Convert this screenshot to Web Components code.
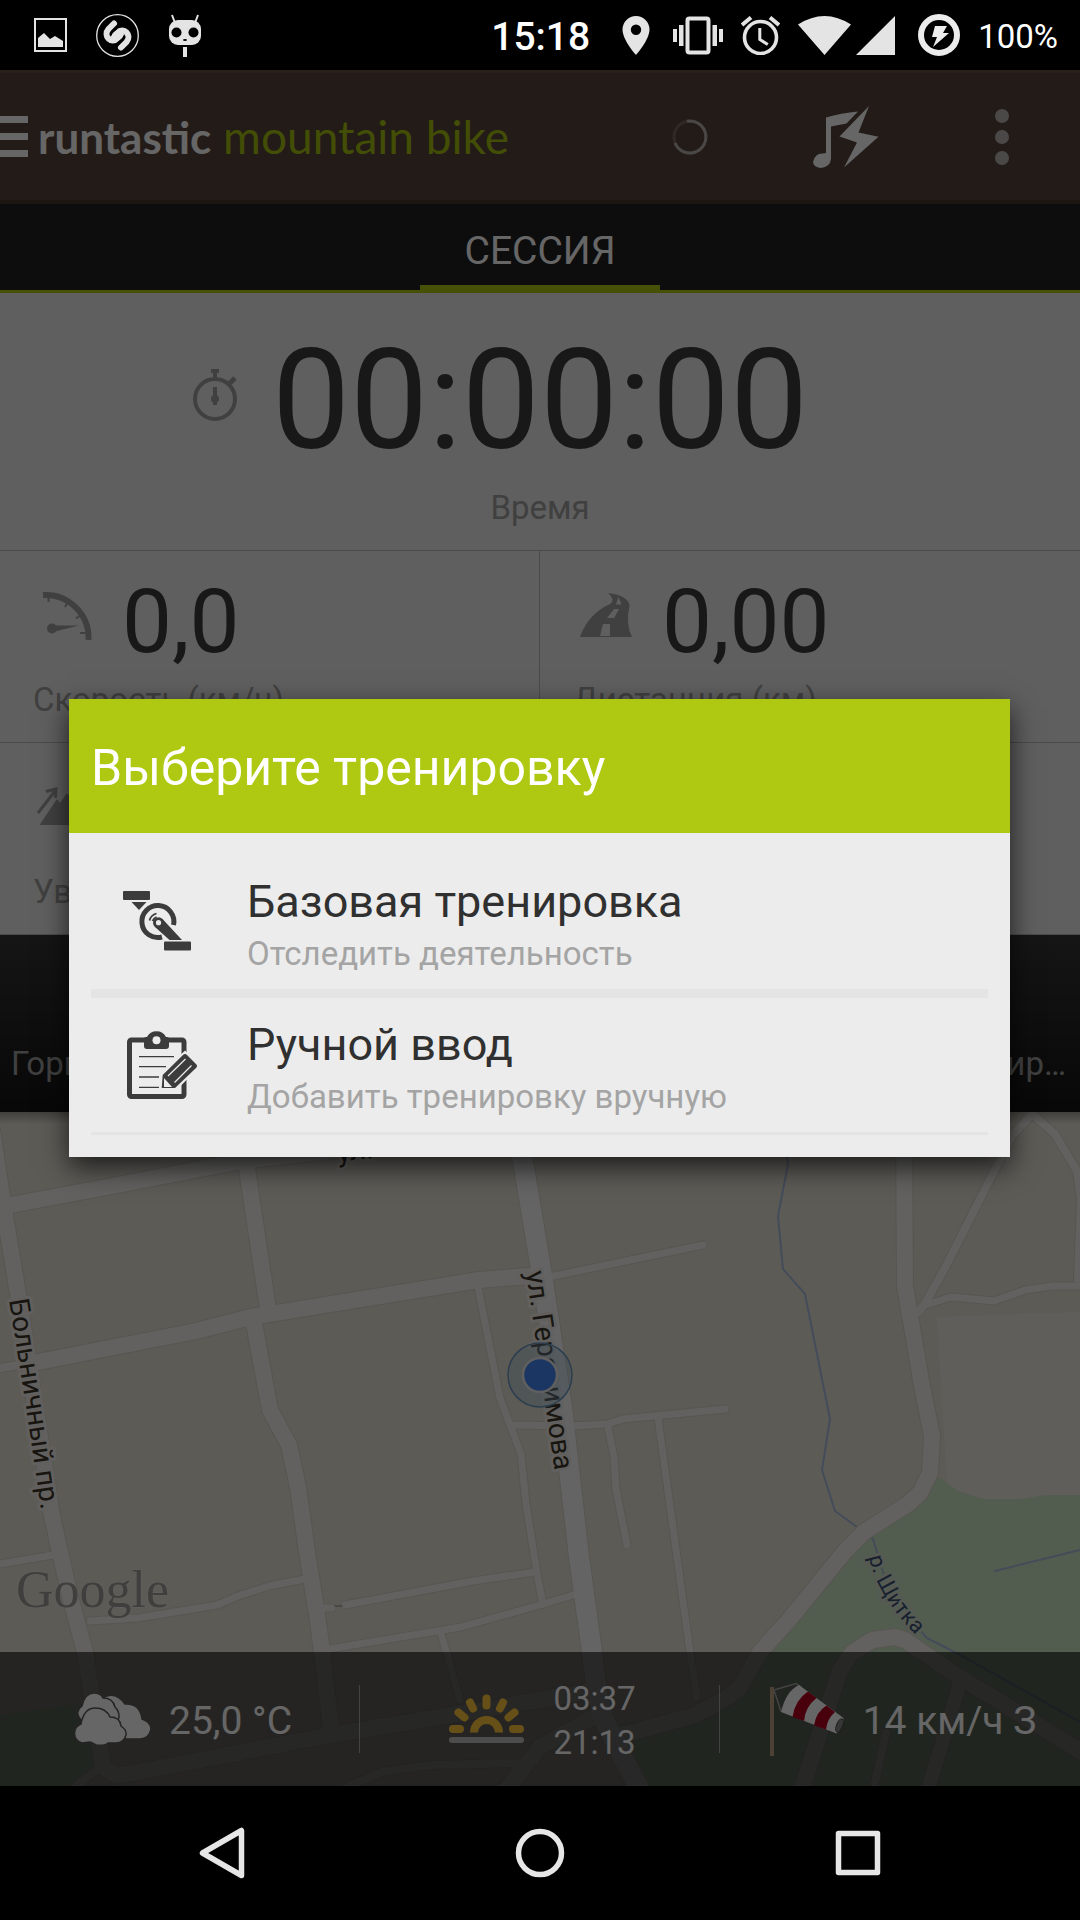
<!DOCTYPE html>
<html lang="ru">
<head>
<meta charset="UTF-8">
<meta name="viewport" content="width=device-width, initial-scale=1">
<title>Runtastic Mountain Bike</title>
<style>
    body {
        margin: 0;
        background: #000;
        font-family: Roboto, "Noto Sans", sans-serif;
    }
</style>
</head>
<body>
<phone-screen>
    <status-bar slot="status"></status-bar>
    <app-header></app-header>
    <tab-strip>СЕССИЯ</tab-strip>
    <stats-panel></stats-panel>
    <sport-band>
        <span>Горный</span>
        <span slot="end">Тренир…</span>
    </sport-band>
    <map-view>
        <weather-bar></weather-bar>
    </map-view>
    <workout-dialog slot="dialog" heading="Выберите тренировку">
        <workout-option heading="Базовая тренировка" note="Отследить деятельность">
            <svg slot="icon" viewBox="0 0 90 90" fill="#3c3c3c" aria-hidden="true">
                <rect x="10" y="14" width="27" height="9" rx="1"/>
                <path d="M18.500 25h15l-7.500 8z"/>
                <path d="M60.500 48A16 16 0 1 0 49 60" fill="none" stroke="#3c3c3c" stroke-width="5"/>
                <path d="M36.500 43.500a10 10 0 0 1 7-7M39.500 44a7 7 0 0 1 4-4" fill="none" stroke="#3c3c3c" stroke-width="1.800"/>
                <path d="M49.500 42L69 63H56.500L42 50z"/>
                <circle cx="45.500" cy="45.700" r="5.500"/>
                <circle cx="45.500" cy="45.700" r="2.600" fill="#ececec"/>
                <rect x="51" y="64.500" width="27" height="9" rx="1"/>
            </svg>
        </workout-option>
        <workout-option heading="Ручной ввод" note="Добавить тренировку вручную" last>
            <svg slot="icon" viewBox="0 0 90 90" fill="#3c3c3c" aria-hidden="true">
                <rect x="16.500" y="20" width="54.500" height="56.500" rx="2" fill="none" stroke="#3c3c3c" stroke-width="5"/>
                <path d="M31 19q0-2 2-2h1a10.500 10 0 0 1 19 0h1q2 0 2 2v7q0 3-3 3H34q-3 0-3-3z"/>
                <circle cx="43.500" cy="20.300" r="4" fill="#ececec"/>
                <path d="M26 36.700h35M26 46.700h27M26 57h20M26 67.300h20" stroke="#3c3c3c" stroke-width="1.300"/>
                <path d="M49.700 55L72 34l12 12-22 22H48.700z" stroke="#ececec" stroke-width="5"/>
                <path d="M49.700 55L70 35q2-2 4 0l9 9q2 2 0 4L62 68H48.700z"/>
                <path d="M51 58l8 9h-8z" fill="#ececec"/>
                <path d="M55 56l17.500-17M61.500 62.500l17-17" stroke="#ececec" stroke-width="1.200"/>
            </svg>
        </workout-option>
    </workout-dialog>
    <nav-bar slot="nav"></nav-bar>
</phone-screen>

<script>
// Shared helper: every element renders its markup into an open shadow root
class BaseElement extends HTMLElement {
    constructor() {
        super();
        this.attachShadow({ mode: "open" });
    }

    connectedCallback() {
        this.shadowRoot.innerHTML = this.render();
    }
}

class PhoneScreen extends BaseElement {
    render() {
        return `
            <style>
                :host { display: flex; flex-direction: column; min-height: 100vh; }
                main { flex: 1; display: grid; position: relative; }
                .app { display: flex; flex-direction: column; min-width: 0; }
                .scrim {
                    position: absolute;
                    inset: 0;
                    display: grid;
                    align-items: center;
                    padding: 0 70px 0 69px;
                    background: rgba(0, 0, 0, 0.6);
                }
            </style>
            <slot name="status"></slot>
            <main>
                <div class="app"><slot></slot></div>
                <div class="scrim"><slot name="dialog"></slot></div>
            </main>
            <slot name="nav"></slot>
        `;
    }
}

class StatusBar extends BaseElement {
    render() {
        return `
            <style>
                :host {
                    display: flex;
                    justify-content: space-between;
                    height: 70px;
                    padding: 0 22px 0 34px;
                    background: #000;
                    color: #fff;
                    box-sizing: border-box;
                }
                div { display: flex; align-items: center; }
                .left { gap: 29px; }
                .right { gap: 18px; }
                svg { display: block; }
                span { padding-top: 3px; }
                .time { font-size: 39px; font-weight: 500; margin-right: 8px; }
                .battery { font-size: 33px; }
            </style>
            <div class="left">
                <svg width="33" height="34" viewBox="0 0 33 34" aria-hidden="true">
                    <rect x="1" y="1" width="31" height="32" fill="none" stroke="#e4e4e4" stroke-width="2"/>
                    <path d="M4 29v-9l6-5 6 6 5-3 8 5v6z" fill="#e4e4e4"/>
                </svg>
                <svg width="43" height="43" viewBox="0 0 43 43" fill="none" aria-hidden="true">
                    <circle cx="21.500" cy="21.500" r="20.800" stroke="#e4e4e4" stroke-width="1.300"/>
                    <g stroke="#e4e4e4" stroke-width="6" stroke-linecap="round">
                        <path d="M18 9.500l-5.500 5.500c-6 7 3 15.500 9 9.500l3.500-3.500"/>
                        <path d="M25 33.500l5.500-5.500c6-7-3-15.500-9-9.500l-3.500 3.500"/>
                    </g>
                    <path d="M15.500 21.500q-1-1 1-3.500l4-3M27.500 21.500q1 1-1 3.500l-4 3" stroke="#000" stroke-width="1.500"/>
                </svg>
                <svg width="34" height="43" viewBox="0 0 34 43" aria-hidden="true">
                    <path d="M4 1l3 8M30 1l-3 8" stroke="#e4e4e4" stroke-width="2"/>
                    <rect x="1" y="6" width="32" height="25" rx="9" fill="#e4e4e4"/>
                    <circle cx="8.500" cy="18.500" r="5"/><circle cx="25.500" cy="18.500" r="5"/>
                    <ellipse cx="17" cy="26" rx="2" ry="1"/>
                    <path d="M15 33h4v10h-4z" fill="#e4e4e4"/>
                </svg>
            </div>
            <div class="right">
                <span class="time">15:18</span>
                <svg width="39" height="39" viewBox="0 0 39 39" aria-hidden="true">
                    <path fill="#e4e4e4" fill-rule="evenodd" d="M20 0a13.500 13.500 0 0 0-13.500 13.500C6.500 24 20 39 20 39s13.500-15 13.500-25.500A13.500 13.500 0 0 0 20 0zm0 8.500a5.200 5.200 0 1 1 0 10.400 5.200 5.200 0 0 1 0-10.400z"/>
                </svg>
                <svg width="50" height="39" viewBox="0 0 50 39" fill="#e4e4e4" aria-hidden="true">
                    <path d="M0 13h4v13H0zM6 9h4.500v21H6zM39.500 9H44v21h-4.500zM46 13h4v13h-4z"/>
                    <rect x="14.500" y="2.500" width="21" height="34" rx="2" fill="none" stroke="#e4e4e4" stroke-width="4"/>
                </svg>
                <svg width="39" height="39" viewBox="0 0 39 39" fill="none" stroke="#e4e4e4" aria-hidden="true">
                    <circle cx="19.500" cy="21.500" r="16" stroke-width="3.600"/>
                    <path d="M1 9l9-7.500M38 9l-9-7.500" stroke-width="4"/>
                    <path d="M18.800 12v11.500l8 5" stroke-width="3"/>
                </svg>
                <svg width="102" height="39" viewBox="0 0 102 39" fill="#e4e4e4" aria-hidden="true">
                    <path d="M0 8.500Q26.500-8.500 53 8.500L26.500 39zM97 0v39H58z"/>
                </svg>
                <svg width="42" height="42" viewBox="0 0 42 42" aria-hidden="true">
                    <circle cx="21" cy="21" r="18" fill="none" stroke="#ececec" stroke-width="6"/>
                    <path d="M17 12h12l-4 7h6L15 33l4-10h-5z" fill="#ececec"/>
                </svg>
                <span class="battery">100%</span>
            </div>
        `;
    }
}

class AppHeader extends BaseElement {
    render() {
        return `
            <style>
                :host {
                    display: flex;
                    align-items: center;
                    height: 134px;
                    box-sizing: border-box;
                    background: #58443a;
                    border-top: 3px solid #695041;
                    border-bottom: 4px solid #46392f;
                }
                button { display: grid; place-items: center; padding: 0; border: 0; background: none; }
                .logo { flex: 1; margin-left: 10px; font-family: Lato, sans-serif; font-size: 46px; line-height: 56px; color: #a5c010; white-space: nowrap; }
                .logo b { color: #fff; font-size: 44px; }
                .action { width: 156px; height: 100%; }
            </style>
            <button aria-label="Меню">
                <svg width="28" height="41" fill="#fff"><path d="M0 0h28v7H0zM0 17h28v7H0zM0 34h28v7H0z"/></svg>
            </button>
            <span class="logo"><b>runtastic</b> mountain bike</span>
            <button class="action" aria-label="Загрузка">
                <svg width="36" height="36" viewBox="0 0 36 36" fill="none" stroke-width="3">
                    <circle cx="18" cy="18" r="16" stroke="#756860"/>
                    <path d="M15 2.300A16 16 0 1 1 3 24" stroke="#b8b4b0"/>
                </svg>
            </button>
            <button class="action" aria-label="Музыка">
                <svg width="66" height="62" viewBox="0 0 66 62" fill="#fff">
                    <path d="M13 11.500Q28 7 45 5.500L33.500 17.500 18 20.500V53q-1 8-10 9-8-1-8-6 2-9 10-8.500l3-.5z"/>
                    <path d="M56 0L45.500 26.500l20 4.200L31 61.500l13-25-17.500-6z"/>
                </svg>
            </button>
            <button class="action" aria-label="Ещё">
                <svg width="14" height="56" fill="#b9b6b4"><circle cx="7" cy="7" r="7"/><circle cx="7" cy="28" r="7"/><circle cx="7" cy="49" r="7"/></svg>
            </button>
        `;
    }
}

class TabStrip extends BaseElement {
    render() {
        return `
            <style>
                :host {
                    display: flex;
                    justify-content: center;
                    height: 86px;
                    background: #212121;
                    border-bottom: 3px solid #afc811;
                }
                button {
                    width: 240px;
                    padding: 13px 0 0;
                    border: 0;
                    border-bottom: 5px solid #afc811;
                    background: none;
                    color: #fff;
                    font: 39px Roboto, sans-serif;
                }
            </style>
            <button role="tab" aria-selected="true"><slot></slot></button>
        `;
    }
}

class StatCell extends BaseElement {
    render() {
        return `
            <style>
                :host { display: block; padding: 19px 0 22px 33px; border-bottom: 1px solid #bbb; color: #3e3e3e; white-space: nowrap; }
                .row { display: flex; align-items: center; gap: 19px; height: 100px; font-size: 89px; line-height: 100px; }
                .label { margin-top: 10px; font-size: 33px; line-height: 40px; color: #a0a0a0; }
                ::slotted(span) { padding-top: 3px; }
                ::slotted(svg) { width: 70px; height: 70px; }
                :host([wide]) { padding: 25px 0 22px; }
                :host([wide]) .row { display: grid; grid-template-columns: 1fr auto 1fr; gap: 35px; height: 160px; font-size: 139px; line-height: 160px; }
                :host([wide]) .label { text-align: center; }
                :host([wide]) ::slotted(svg) { width: 44px; height: 66px; justify-self: end; }
            </style>
            <div class="row"><slot name="icon"></slot><slot></slot></div>
            <div class="label">${this.getAttribute("label")}</div>
        `;
    }
}

class StatsPanel extends BaseElement {
    render() {
        return `
            <style>
                :host { display: grid; grid-template-columns: 1fr 1fr; background: #ededed; }
                stat-cell[wide] { grid-column: 1 / -1; }
                .first { border-right: 1px solid #bbb; }
            </style>
            <stat-cell wide label="Время">
                <svg slot="icon" viewBox="0 0 44 66" fill="#a0a0a0">
                    <circle cx="22" cy="32" r="20" fill="none" stroke="#a0a0a0" stroke-width="4"/>
                    <path d="M18 2h8v4h-2v6h-4V6h-2zM20 20h4v18h-4z"/>
                    <path d="M35 18l7-7" stroke="#a0a0a0" stroke-width="5"/>
                    <circle cx="22" cy="32" r="4"/>
                </svg>
                <span>00:00:00</span>
            </stat-cell>
            <stat-cell class="first" label="Скорость (км/ч)">
                <svg slot="icon" viewBox="0 0 70 70" fill="#a0a0a0">
                    <path d="M10 10A43 43 0 0 1 55.500 55" fill="none" stroke="#a0a0a0" stroke-width="6"/>
                    <path d="M15.500 11v6M36 15l-4 7M49 29l-6 4.500M47 48h8" fill="none" stroke="#a0a0a0" stroke-width="2"/>
                    <circle cx="19" cy="43.500" r="5"/>
                    <path d="M19 40.500L46 40.500 20 47z"/>
                </svg>
                <span>0,0</span>
            </stat-cell>
            <stat-cell label="Дистанция (км)">
                <svg slot="icon" viewBox="0 0 70 70" fill="#a0a0a0">
                    <path fill-rule="evenodd" d="M7 52Q15 29 37 19q6-4-2-11 19 2 21.500 12-4 20 2.500 32zM27 51h10V39h-7zM34 33h7l5-9h-5zM43 19.500h5.500L45.500 12z"/>
                </svg>
                <span>0,00</span>
            </stat-cell>
            <stat-cell class="first" label="Увел.">
                <svg slot="icon" viewBox="0 0 70 70" fill="#a0a0a0">
                    <path d="M5 36L22 14M13 14.500l10-2.500-.500 9" fill="none" stroke="#a0a0a0" stroke-width="3"/>
                    <path d="M6.500 48L24 22l3 4 7-10 26 32z"/>
                </svg>
            </stat-cell>
            <stat-cell label=""></stat-cell>
        `;
    }
}

class SportBand extends BaseElement {
    render() {
        return `
            <style>
                :host {
                    display: flex;
                    justify-content: space-between;
                    align-items: flex-end;
                    height: 177px;
                    padding: 0 14px 28px 11px;
                    box-sizing: border-box;
                    background: linear-gradient(#363636, #141414);
                    color: #a0a0a0;
                    font-size: 33px;
                    line-height: 40px;
                }
            </style>
            <slot></slot>
            <slot name="end"></slot>
        `;
    }
}

class MapView extends BaseElement {
    render() {
        // street lines as [width, points]
        const roads = [
            [7, "0,1564 53,1555"],
            [7, "90,1621 138,1618 217,1605 238,1596 269,1586 305,1579"],
            [7, "325,1608 332,1608"],
            [7, "345,1605 473,1581 535,1572"],
            [7, "329,1649 461,1627 540,1605 573,1595"],
            [7, "441,1634 448,1657 460,1700"],
            [7, "478,1287 489,1343 500,1398 521,1454 526,1504 538,1579 543,1604"],
            [7, "515,1425 571,1426 607,1424 623,1419 725,1409"],
            [7, "608,1427 614,1457 616,1489 627,1545"],
            [7, "658,1418 690,1652 697,1697"],
            [7, "549,1277 703,1245"],
            [8, "919,1312 927,1300 945,1268 1012,1136 1032,1114 1055,1134 1077,1171 1081,1200 1078,1279"],
            [7, "922,1306 951,1297 994,1301 1025,1290 1053,1286 1085,1286"],
            [8, "886,1733 871,1800"],
            [8, "340,1790 382,1772 430,1765 516,1763"],
            [8, "70,1790 100,1768"],
            [14, "960,1683 925,1800"],
            [16, "506,1790 540,1747 597,1715"],
            [16, "-8,1130 2,1197 19,1300 52,1516 60,1552 71,1600 85,1652 96,1722 103,1767 117,1776 320,1737 540,1700 597,1690"],
            [16, "5,1206 107,1187 241,1161 400,1143 527,1125"],
            [16, "246,1162 268,1309"],
            [16, "253,1318 270,1410 289,1445 298,1487 307,1552 318,1621 322,1652 331,1727"],
            [8, "-5,1369 30,1363"],
            [16, "38,1362 196,1331 251,1317 479,1280 540,1275"],
            [16, "904,1120 905,1286 922,1386 932,1436 930,1473 920,1493 908,1504 864,1532 846,1550 788,1621 760,1652 740,1687 728,1697 695,1715 615,1737"],
            [16, "800,1795 840,1670 852,1653 872,1640 895,1637 905,1640 953,1673 1090,1757"]
        ];
        const line = (extra, color) => roads.map(([w, p]) =>
            `<polyline points="${p}" stroke="${color}" stroke-width="${w + extra}"/>`).join("");

        return `
            <style>
                :host { flex: 1; display: grid; overflow: hidden; min-height: 400px; }
                svg, ::slotted(*) { grid-area: 1 / 1; }
                svg { width: 100%; height: 100%; min-height: 0; display: block; }
                ::slotted(*) { align-self: end; }
                text { font: 28px Roboto, sans-serif; paint-order: stroke; stroke: #f3f1ea; stroke-width: 6px; stroke-linejoin: round; fill: #3c362c; }
                .river { font-size: 22px; fill: #3c5078; stroke: #d4e2cc; }
                .google { font: 52px "Liberation Serif", serif; fill: #a09e98; stroke-width: 1px; }
            </style>
            <svg viewBox="0 1112 1080 674" preserveAspectRatio="xMidYMin slice">
                <defs>
                    <path id="north" d="M9 1300L25 1400 44 1530"/>
                    <path id="main" d="M526 1272L559 1500"/>
                    <path id="stream" d="M869 1557Q878 1600 926 1645"/>
                    <linearGradient id="edge" x2="0" y2="1"><stop stop-opacity=".3"/><stop offset="1" stop-opacity="0"/></linearGradient>
                </defs>
                <rect y="1112" width="1080" height="674" fill="#e8e3d7"/>
                <path fill="#f0ebe2" d="M937 1317L1080 1312V1495H1046L1020 1499H984L958 1491 947 1483z"/>
                <path fill="#cde6c6" d="M938 1477L958 1491 984 1499H1020L1046 1495H1080V1786H645L610 1725 695 1715 740 1687 788 1621 864 1532 930 1490z"/>
                <path fill="#cde6c6" d="M0 1715L90 1702 103 1767 70 1786H0z"/>
                <g fill="none" stroke-linejoin="round" stroke-linecap="round">
                    <path d="M786 1150L788 1164 778 1216 783 1269 805 1294 830 1419 822 1470 835 1511 857 1527 873 1539 884 1575 917 1627 927 1638 964 1657 1080 1722M995 1571L1080 1550" stroke="#aabedf" stroke-width="2"/>
                    <g>${line(2, "#d9d4c9")}</g>
                    <polyline points="516,1120 542,1275 562,1407 579,1557 592,1652 597,1693 604,1720 645,1800" stroke="#d9d4c9" stroke-width="22"/>
                    <g>${line(0, "#f5f2ed")}</g>
                    <polyline points="516,1120 542,1275 562,1407 579,1557 592,1652 597,1693 604,1720 645,1800" stroke="#fcfbfa" stroke-width="20"/>
                    <path d="M335 1606h7" stroke="#8a877f" stroke-width="1"/>
                </g>
                <text transform="rotate(-7 338 1162)" x="338" y="1162">ул.</text>
                <text><textPath href="#north">Больничный пр.</textPath></text>
                <text><textPath href="#main">ул. Герасимова</textPath></text>
                <text class="river"><textPath href="#stream">р. Щитка</textPath></text>
                <text class="google" x="16" y="1607">Google</text>
                <circle cx="540" cy="1375" r="32" fill="#8fb8d8" fill-opacity=".35" stroke="#6f9cc4" stroke-width="1.500"/>
                <circle cx="540" cy="1375" r="17" fill="#4687fa" stroke="#eee" stroke-width="2.500"/>
                <rect y="1112" width="1080" height="12" fill="url(#edge)"/>
            </svg>
            <slot></slot>
        `;
    }
}

class WeatherBar extends BaseElement {
    render() {
        return `
            <style>
                :host {
                    display: grid;
                    grid-template-columns: repeat(3, 1fr);
                    align-items: center;
                    height: 134px;
                    background: rgba(0, 0, 0, 0.6);
                    color: #fff;
                    font-size: 39px;
                    white-space: nowrap;
                }
                div { display: flex; align-items: center; justify-content: center; gap: 18px; height: 68px; padding-left: 6px; }
                div:not(:last-child) { border-right: 1px solid #a8a8a8; }
                span { padding-top: 4px; }
                .sun { gap: 28px; font-size: 33px; line-height: 44px; }
            </style>
            <div>
                <svg width="78" height="52" viewBox="0 0 78 52" fill="#fff" stroke="#5c5b59" stroke-width="1.500" aria-hidden="true">
                    <path d="M31 4q12-6 21 7 15-1 17 15 9 3 9 10-2 10-11 10H54q-8 0-10-8z"/>
                    <path d="M8 27Q1 19 9 13 12 0 21 0q7 0 9 5 10 0 12 9 6 6 3 14l-12 8-24-4z"/>
                    <path d="M9 50A10 10 0 0 1 8 31Q11 15 22 15q11 0 15 9 10 0 11 9 6 4 5 9-2 8-10 8h-8q-3 3-12 2-5-3-6-3z"/>
                </svg>
                <span>25,0 °C</span>
            </div>
            <div class="sun">
                <svg width="76" height="50" viewBox="0 0 76 50" fill="none" stroke="#ffc83c" stroke-width="8" stroke-linecap="round" aria-hidden="true">
                    <path d="M25 38.500a12.500 12.500 0 0 1 25 0" stroke-linecap="butt"/>
                    <path d="M4 35h7M64 35h7M9.500 18.500l6 5M65.500 18.500l-6 5M21 8.500l3 6M54 8.500l-3 6M37.500 4.500v7"/>
                    <path d="M3 46h69" stroke="#c0c0c0" stroke-width="6"/>
                </svg>
                <span>03:37<br>21:13</span>
            </div>
            <div>
                <svg width="75" height="74" viewBox="0 0 75 74" aria-hidden="true">
                    <path d="M0 5h4v69H0z" fill="#c0a082"/>
                    <path d="M4 8L26 1.500 31 5M4 8l7 21.500" fill="none" stroke="#a8a8a8" stroke-width="1.500"/>
                    <path d="M29 3L73.500 36q1 9-7 15.500L11 30Q16 9 29 3z" fill="#fff"/>
                    <path d="M38 9.500l8.500 6.500Q35 25 34 39l-11.500-4Q25 18 38 9.500zM56.500 23.500L65 30q-8 7-9 17.500l-12-4Q46 30 56.500 23.500z" fill="#b4001e"/>
                    <ellipse cx="69.500" cy="43.500" rx="3" ry="7" transform="rotate(22 69.500 43.500)" fill="#888" stroke="#444"/>
                </svg>
                <span>14 км/ч З</span>
            </div>
        `;
    }
}

class WorkoutDialog extends BaseElement {
    render() {
        return `
            <style>
                :host { display: block; background: #ececec; box-shadow: 0 10px 26px rgba(0, 0, 0, 0.7); }
                h2 {
                    margin: 0;
                    padding: 39px 22px 35px;
                    background: #afc811;
                    color: #fff;
                    font-size: 50px;
                    font-weight: 400;
                    line-height: 60px;
                }
                .list { padding: 22px; }
            </style>
            <section role="dialog" aria-labelledby="title">
                <h2 id="title">${this.getAttribute("heading")}</h2>
                <div class="list"><slot></slot></div>
            </section>
        `;
    }
}

class WorkoutOption extends BaseElement {
    render() {
        return `
            <style>
                :host { display: block; border-bottom: 9px solid #e4e4e4; }
                :host([last]) { border-bottom-width: 3px; }
                button {
                    display: flex;
                    align-items: center;
                    gap: 44px;
                    width: 100%;
                    padding: 0 22px;
                    border: 0;
                    background: none;
                    text-align: left;
                    font-family: inherit;
                }
                ::slotted(svg) { width: 90px; height: 90px; flex: none; }
                .text { display: grid; gap: 5px; padding: 20px 0 15px; }
                .title { font-size: 45px; line-height: 54px; color: #303030; }
                .note { font-size: 33px; line-height: 40px; color: #a4a4a4; }
            </style>
            <button>
                <slot name="icon"></slot>
                <span class="text">
                    <span class="title">${this.getAttribute("heading")}</span>
                    <span class="note">${this.getAttribute("note")}</span>
                </span>
            </button>
        `;
    }
}

class NavBar extends BaseElement {
    render() {
        return `
            <style>
                :host { display: grid; grid-template-columns: repeat(3, 1fr); height: 134px; padding: 0 63px; background: #000; }
                button { display: grid; place-items: center; padding: 0; border: 0; background: none; }
                svg { fill: none; stroke: #e6e6e6; stroke-width: 5.500px; stroke-linejoin: round; }
            </style>
            <button aria-label="Назад"><svg width="46" height="52" viewBox="0 0 46 52"><path d="M42.500 3.500v45L3.500 26z"/></svg></button>
            <button aria-label="Домой"><svg width="50" height="50" viewBox="0 0 50 50"><circle cx="25" cy="25" r="21.500"/></svg></button>
            <button aria-label="Обзор"><svg width="46" height="46" viewBox="0 0 46 46"><rect x="3.500" y="3.500" width="39" height="39"/></svg></button>
        `;
    }
}

customElements.define("phone-screen", PhoneScreen);
customElements.define("status-bar", StatusBar);
customElements.define("app-header", AppHeader);
customElements.define("tab-strip", TabStrip);
customElements.define("stat-cell", StatCell);
customElements.define("stats-panel", StatsPanel);
customElements.define("sport-band", SportBand);
customElements.define("map-view", MapView);
customElements.define("weather-bar", WeatherBar);
customElements.define("workout-dialog", WorkoutDialog);
customElements.define("workout-option", WorkoutOption);
customElements.define("nav-bar", NavBar);
</script>
</body>
</html>
